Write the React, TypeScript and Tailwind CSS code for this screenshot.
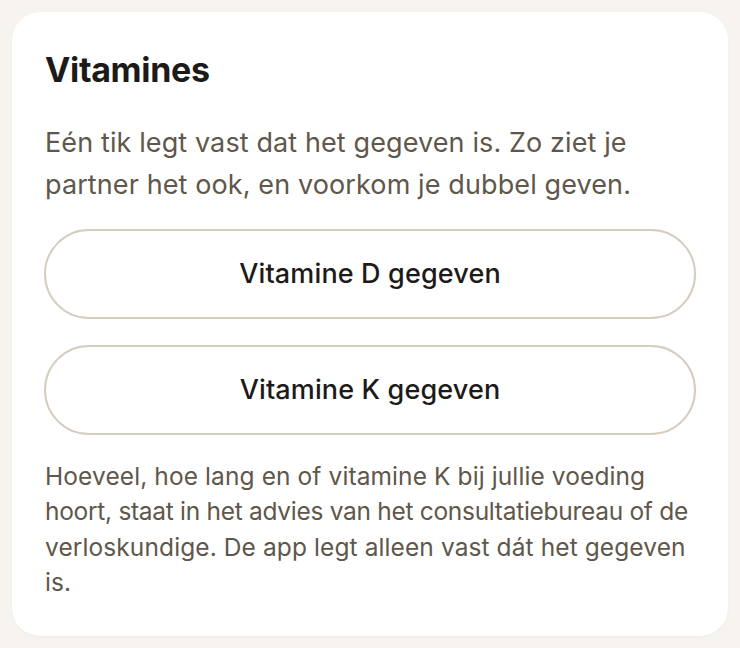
import React from "react";

export default function App() {
  return (
    <div className="min-h-[648px] w-[740px] bg-[#f7f4ef] p-3" style={{ fontFamily: "Inter, 'Noto Sans', sans-serif" }}>
      <div className="flex h-[624px] flex-col rounded-[28px] bg-white px-[32px] pt-9 shadow-[0_1px_3px_rgba(60,40,20,0.04)]">
        <h1 className="ml-px text-[34px] font-bold leading-[44px] tracking-[-0.01em] text-[#1c1b19]">Vitamines</h1>
        <p className="ml-px mt-[30px] text-[27px] leading-[42px] tracking-[0.004em] text-[#5f574b]">
          Eén tik legt vast dat het gegeven is. Zo ziet je partner het ook, en voorkom je dubbel geven.
        </p>
        <div className="mt-[23px] flex flex-col gap-[26px]">
          <button className="h-[90px] w-full rounded-full border-2 border-[#d6ccbf] bg-white text-[27px] font-medium tracking-[0.005em] text-[#1c1b19]">
            Vitamine D gegeven
          </button>
          <button className="h-[90px] w-full rounded-full border-2 border-[#d6ccbf] bg-white text-[27px] font-medium tracking-[0.005em] text-[#1c1b19]">
            Vitamine K gegeven
          </button>
        </div>
        <p className="ml-px mt-[24px] whitespace-nowrap text-[24.5px] leading-[35.4px] tracking-[0.004em] text-[#5f574b]">
          <span className="block">Hoeveel, hoe lang en of vitamine K bij jullie voeding</span>
          <span className="block tracking-[-0.012em]">hoort, staat in het advies van het consultatiebureau of de</span>
          <span className="block">verloskundige. De app legt alleen vast dát het gegeven</span>
          <span className="block">is.</span>
        </p>
      </div>
    </div>
  );
}
